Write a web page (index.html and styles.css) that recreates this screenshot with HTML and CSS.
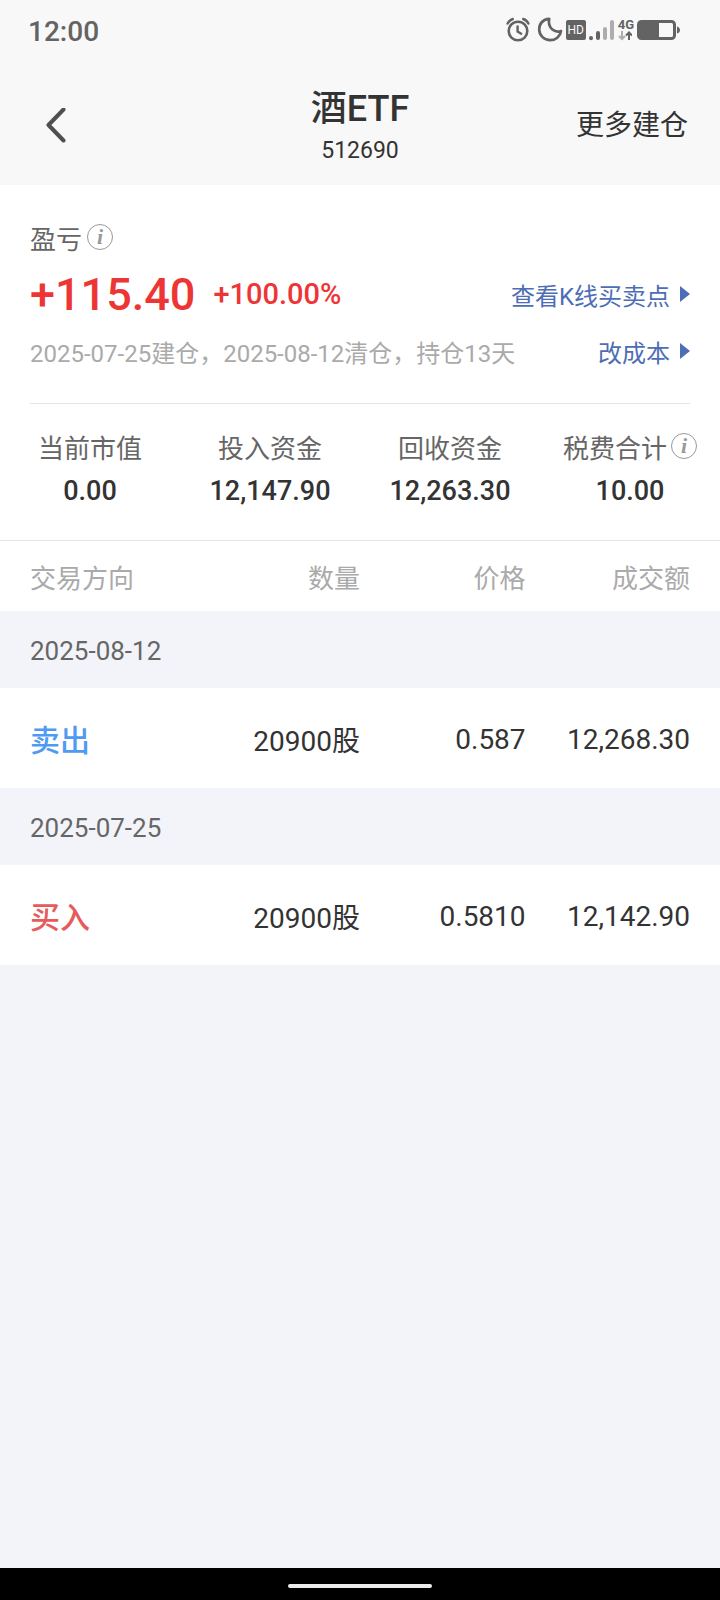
FILE: index.html
```
<!DOCTYPE html>
<html lang="zh-CN">
<head>
    <meta charset="UTF-8">
    <meta name="viewport" content="width=device-width, initial-scale=1.0">
    <title>酒ETF 512690</title>

    <link rel="stylesheet" href="styles.css">
</head>
<body>
    <div class="status-bar">
        <span class="clock">12:00</span>
        <div class="status-icons">
            <svg class="alarm" width="24" height="26" viewBox="0 0 24 26" fill="none" stroke="#636363" stroke-linecap="round">
                <circle cx="12" cy="14" r="9.3" stroke-width="2.6"/>
                <path d="M11.6 9.500v5l3.600 2.200" stroke-width="2.400"/>
                <path d="M1.600 6.600C2.600 4.300 4.200 2.800 6.800 2M22.400 6.600C21.400 4.300 19.800 2.800 17.200 2" stroke-width="2.400"/>
            </svg>
            <svg class="moon" width="26" height="26" viewBox="0 0 26 26" fill="none" stroke="#636363" stroke-width="2.700" stroke-linejoin="round">
                <path d="M12.200 1.800C5.800 2 2 7.200 2.200 12.600c.2 6 5 10.600 11 10.600 5.400 0 10-3.600 10.800-9.200C18.800 16.200 10.200 12 12.200 1.800z"/>
            </svg>
            <span class="hd">HD</span>
            <svg class="signal" width="26" height="22" viewBox="0 0 26 22" stroke-linecap="round" stroke-width="4">
                <path d="M2 19v.2M9 14v5" stroke="#636363"/>
                <path d="M16 10v9M23 3v16" stroke="#adadad"/>
            </svg>
            <div class="network">
                <span>4G</span>
                <svg width="14" height="10" viewBox="0 0 14 10" fill="none" stroke-width="2">
                    <path d="M4 0v8M1 5l3 3 3-3" stroke="#adadad"/>
                    <path d="M11 9V2M8 4.500l3-3 3 3" stroke="#636363"/>
                </svg>
            </div>
            <svg class="battery" width="43" height="20" viewBox="0 0 43 20">
                <rect x="1.500" y="1.500" width="36" height="17" rx="3" fill="none" stroke="#636363" stroke-width="3"/>
                <rect x="3" y="3" width="19" height="14" fill="#636363"/>
                <path d="M40 6.500c4 1 4 6 0 7z" fill="#636363"/>
            </svg>
        </div>
    </div>

    <header class="header">
        <button class="back-button" type="button" aria-label="返回">
            <svg width="20" height="36" viewBox="0 0 20 36" fill="none" stroke="#4f4f4f" stroke-width="4" stroke-linecap="round" stroke-linejoin="round">
                <path d="M17.500 1.500L2.500 17l15 15.500"/>
            </svg>
        </button>
        <div class="title">
            <h1>酒ETF</h1>
            <p>512690</p>
        </div>
        <a class="more" href="#">更多建仓</a>
    </header>

    <main>
        <section class="summary">
            <div class="row row-label">
                <span>盈亏</span>
                <button class="info" type="button" aria-label="盈亏说明">i</button>
            </div>
            <div class="row row-amount">
                <span class="amount">+115.40</span>
                <span class="percent">+100.00%</span>
                <a class="link" href="#">查看K线买卖点</a>
            </div>
            <div class="row row-note">
                <span>2025-07-25建仓，2025-08-12清仓，持仓13天</span>
                <a class="link" href="#">改成本</a>
            </div>
        </section>

        <dl class="stats">
            <div>
                <dt>当前市值</dt>
                <dd>0.00</dd>
            </div>
            <div>
                <dt>投入资金</dt>
                <dd>12,147.90</dd>
            </div>
            <div>
                <dt>回收资金</dt>
                <dd>12,263.30</dd>
            </div>
            <div>
                <dt>税费合计<button class="info" type="button" aria-label="税费说明">i</button></dt>
                <dd>10.00</dd>
            </div>
        </dl>

        <table class="trades">
            <thead>
                <tr>
                    <th>交易方向</th>
                    <th>数量</th>
                    <th>价格</th>
                    <th>成交额</th>
                </tr>
            </thead>
            <tbody>
                <tr class="date">
                    <td colspan="4">2025-08-12</td>
                </tr>
                <tr class="trade">
                    <td class="sell">卖出</td>
                    <td>20900股</td>
                    <td>0.587</td>
                    <td>12,268.30</td>
                </tr>
                <tr class="date">
                    <td colspan="4">2025-07-25</td>
                </tr>
                <tr class="trade">
                    <td class="buy">买入</td>
                    <td>20900股</td>
                    <td>0.5810</td>
                    <td>12,142.90</td>
                </tr>
            </tbody>
        </table>
    </main>

    <div class="nav-bar"><span></span></div>
</body>
</html>
```
FILE: styles.css
```
* {
    box-sizing: border-box;
}

body {
    font-family: Roboto, "Noto Sans CJK SC", sans-serif;
    background: #f3f4f9;
    color: #333;
    margin: 0;
    min-height: 100vh;
    display: flex;
    flex-direction: column;
}

h1, p, dl, dd {
    margin: 0;
}

a {
    text-decoration: none;
}

button {
    background: none;
    border: none;
    padding: 0;
    cursor: pointer;
}

svg {
    display: block;
    flex-shrink: 0;
}

/* Status bar */
.status-bar {
    display: flex;
    justify-content: space-between;
    align-items: center;
    height: 60px;
    padding: 0 40px 0 28px;
    background: #f8f8f8;
    color: #636363;
}

.clock {
    font-size: 28px;
    font-weight: 500;
    line-height: 32px;
    padding-top: 4px;
}

.status-icons {
    display: flex;
    align-items: center;
    gap: 3px;
}

.alarm {
    margin-right: 4px;
}

.hd {
    width: 20px;
    border-radius: 2px;
    background: #636363;
    color: #f8f8f8;
    font-size: 12px;
    line-height: 20px;
    text-align: center;
}

.network span {
    display: block;
    font-size: 13px;
    font-weight: 700;
    line-height: 12px;
}

/* Header */
.header {
    display: grid;
    grid-template-columns: 1fr auto 1fr;
    align-items: center;
    padding: 24px 32px 17px;
    background: #f8f8f8;
}

.back-button {
    justify-self: start;
    margin-left: 14px;
}

.title {
    text-align: center;
}

.title h1 {
    font-size: 36px;
    font-weight: 500;
    line-height: 50px;
}

.title p {
    font-size: 23px;
    line-height: 34px;
}

.more {
    justify-self: end;
    color: #333;
    font-size: 28px;
    line-height: 40px;
}

/* Profit summary */
main {
    flex: 1;
}

.summary {
    padding: 32px 30px 0;
    background: #fff;
}

.row {
    display: flex;
    align-items: center;
}

.row-label {
    gap: 5px;
    height: 40px;
    color: #666;
    font-size: 26px;
}

.info {
    width: 26px;
    height: 26px;
    border: 1px solid #999;
    border-radius: 50%;
    color: #999;
    font: italic bold 22px/22px "Liberation Serif", serif;
    text-align: center;
}

.row-amount {
    height: 74px;
    color: #ee3535;
    font-weight: 500;
}

.amount {
    font-size: 45px;
}

.percent {
    margin-left: 18px;
    font-size: 29px;
}

.row-note {
    height: 73px;
    padding-bottom: 32px;
    border-bottom: 1px solid #e5e5e5;
    color: #aaa;
    font-size: 24px;
}

.link {
    display: flex;
    align-items: center;
    gap: 10px;
    margin-left: auto;
    color: #4d6db5;
    font-size: 24px;
    font-weight: 400;
}

.link::after {
    content: "";
    border-left: 10px solid #4d6db5;
    border-top: 8px solid transparent;
    border-bottom: 8px solid transparent;
}

/* Totals */
.stats {
    display: grid;
    grid-template-columns: repeat(4, 1fr);
    padding: 24px 0 22px;
    border-bottom: 1px solid #e5e5e5;
    background: #fff;
}

.stats dt {
    display: flex;
    justify-content: center;
    align-items: center;
    gap: 4px;
    height: 36px;
    color: #666;
    font-size: 26px;
}

.stats dd {
    font-size: 27px;
    font-weight: 500;
    line-height: 54px;
    text-align: center;
}

/* Trades */
.trades {
    width: 100%;
    border-collapse: collapse;
    table-layout: fixed;
    text-align: right;
}

.trades th {
    width: 25%;
    height: 70px;
    padding: 0;
    background: #fff;
    color: #aaa;
    font-size: 26px;
    font-weight: 400;
}

.trades th:nth-child(3) {
    width: 23%;
}

.trades th:nth-child(4) {
    width: 27%;
}

.trades td {
    padding: 2px 0 0;
}

.trades tr > :first-child {
    padding-left: 30px;
    text-align: left;
}

.trades tr > :last-child {
    padding-right: 30px;
}

.date td {
    height: 77px;
    color: #666;
    font-size: 26px;
}

.trade td {
    height: 100px;
    background: #fff;
    font-size: 28px;
}

.trade .sell, .trade .buy {
    padding-top: 0;
    font-size: 30px;
    font-weight: 500;
}

.trade .sell {
    color: #4f9af2;
}

.trade .buy {
    color: #e65b5b;
}

/* System navigation */
.nav-bar {
    display: flex;
    justify-content: center;
    align-items: center;
    height: 32px;
    padding-top: 4px;
    background: #000;
}

.nav-bar span {
    width: 20%;
    height: 4px;
    border-radius: 2px;
    background: #ececec;
}
```
